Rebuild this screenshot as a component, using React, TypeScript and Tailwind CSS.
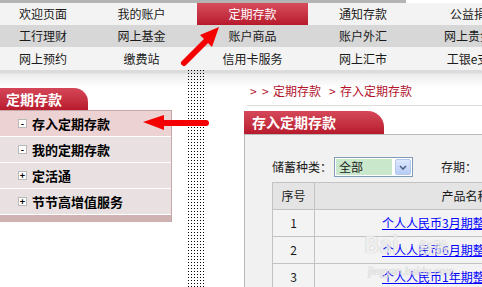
import React from 'react';

const navRows = [
  { bg: 'bg-[#f3f3f3]', h: 'h-[22px]', items: ['欢迎页面', '我的账户', '定期存款', '通知存款', '公益捐款'] },
  { bg: 'bg-[#d7d7d7]', h: 'h-[22px]', items: ['工行理财', '网上基金', '账户商品', '账户外汇', '网上贵金属'] },
  { bg: 'bg-[#f3f3f3]', h: 'h-[23px]', items: ['网上预约', '缴费站', '信用卡服务', '网上汇市', '工银e支付'] },
];

const colWidths = ['w-[86px]', 'w-[111px]', 'w-[111px]', 'w-[110px]', 'w-[112px]'];

const sideItems = [
  { label: '存入定期存款', open: true, active: true },
  { label: '我的定期存款', open: true, active: false },
  { label: '定活通', open: false, active: false },
  { label: '节节高增值服务', open: false, active: false },
];

const products = [
  { no: 1, name: '个人人民币3月期整存整取' },
  { no: 2, name: '个人人民币6月期整存整取' },
  { no: 3, name: '个人人民币1年期整存整取' },
];

const App = () => {
  return (
    <div className="relative h-[287px] w-[482px] overflow-hidden bg-white font-['Noto_Sans_CJK_SC',sans-serif] text-[#1a1a1a]">
      {/* top nav */}
      <div className="flex h-[3px]">
        <div className="w-[406px] bg-[#b4b4b4]" />
      </div>
      {navRows.map((row, r) => (
        <div key={r} className={`flex ${row.h} ${row.bg}`}>
          {row.items.map((item, i) => {
            const active = r === 0 && i === 2;
            return (
              <div
                key={item}
                className={`${colWidths[i]} flex shrink-0 items-center justify-center text-[12px] leading-none ${
                  active ? 'bg-gradient-to-b from-[#d84c5d] to-[#b7182c] text-white' : ''
                }`}
              >
                {item}
              </div>
            );
          })}
        </div>
      ))}

      {/* main */}
      <div className="flex h-[217px] bg-[linear-gradient(#dcdcdc_0px,#dcdcdc_3px,#ececec_4px,#ffffff_18px)]">
        {/* sidebar */}
        <div className="w-[172px] shrink-0 pt-[18px]">
          <div className="h-[22px] w-[88px] rounded-tr-[14px] bg-gradient-to-b from-[#d44658] to-[#b9192d] pl-[6px] text-[14px] font-bold leading-[22px] text-white">
            定期存款
          </div>
          <div className="border-t border-r border-[#c6a7a9]">
            {sideItems.map((s) => (
              <div
                key={s.label}
                className={`flex h-[26px] items-center border-b border-white pl-[18px] ${
                  s.active ? 'bg-[#ecd2d2]' : 'bg-[#e9e1e1]'
                }`}
              >
                <span className="flex h-[9px] w-[9px] items-center justify-center border border-[#b9b9b9] bg-white text-[9px] font-bold leading-none text-black">
                  {s.open ? '-' : '+'}
                </span>
                <span className="ml-[5px] text-[13px] font-bold leading-none text-black">{s.label}</span>
              </div>
            ))}
            <div className="h-[7px] bg-[#cfb3b3]" />
          </div>
        </div>

        {/* dotted separator */}
        <div className="ml-[16px] w-[16px] shrink-0 bg-[conic-gradient(from_270deg_at_1px_1px,#000_90deg,transparent_0)] bg-[length:3px_3px]" />

        {/* content */}
        <div className="ml-[40px] min-w-0 flex-1">
          <div className="flex pl-[6px] pt-[14px] text-[12px] leading-[14px] text-[#b3142b]">
            <span className="w-[12px]">&gt;</span>
            <span className="w-[11px]">&gt;</span>
            <span>定期存款</span>
            <span className="ml-[8px] w-[11px]">&gt;</span>
            <span>存入定期存款</span>
          </div>
          <div className="ml-[3px] mt-[7px] h-px bg-[#dcdcdc]" />
          <div className="mt-[5px] h-[23px] w-[140px] rounded-tr-[16px] bg-gradient-to-b from-[#d54859] to-[#b8192d] pl-[8px] text-[14px] font-bold leading-[23px] text-white">
            存入定期存款
          </div>
          <div className="h-[200px] w-[400px] border-l border-t border-[#b9b9b9] bg-[#f1f1f1] pl-[27px] pt-[22px]">
            <div className="flex h-[20px] items-center text-[12px]">
              <span className="w-[62px] leading-none">储蓄种类：</span>
              <div className="flex h-[20px] w-[79px] border border-[#7f9db9] bg-white p-px">
                <div className="flex flex-1 items-center bg-[#c9e7cb] pl-[3px] leading-none">全部</div>
                <div className="ml-[3px] flex w-[16px] items-center justify-center rounded-[2px] border border-[#b2c6ee] bg-gradient-to-b from-[#dce7fd] to-[#b7ccf5]">
                  <svg width="8" height="5" viewBox="0 0 8 5">
                    <path d="M1 1 L4 4 L7 1" fill="none" stroke="#4d6185" strokeWidth="1.6" />
                  </svg>
                </div>
              </div>
              <span className="ml-[28px] leading-none">存期：</span>
            </div>
            <table className="mt-[5px] table-fixed border-collapse text-[12px]">
              <colgroup>
                <col className="w-[42px]" />
                <col className="w-[302px]" />
              </colgroup>
              <thead>
                <tr className="h-[27px] bg-[#e4e4e4]">
                  <th className="border border-[#c2c2c2] font-normal">序号</th>
                  <th className="border border-[#c2c2c2] font-normal">产品名称</th>
                </tr>
              </thead>
              <tbody>
                {products.map((p) => (
                  <tr key={p.no} className="h-[27px] bg-[#f3f3f3]">
                    <td className="border border-[#c2c2c2] text-center">{p.no}</td>
                    <td className="whitespace-nowrap border border-[#c2c2c2] pl-[67px] text-left">
                      <a className="text-[#0000ff] underline">{p.name}</a>
                    </td>
                  </tr>
                ))}
              </tbody>
            </table>
          </div>
        </div>
      </div>

      {/* watermark */}
      <div className="pointer-events-none absolute left-[364px] top-[232px] flex items-end text-[#efefef] opacity-80 [text-shadow:0_0_1px_#a8a8a8]">
        <span className="text-[22px] font-bold leading-none">Bai</span>
        <span className="ml-[20px] text-[15px] font-bold leading-none">经验</span>
      </div>
      <div className="pointer-events-none absolute left-[368px] top-[266px] text-[10px] leading-none text-[#ebebeb] opacity-80 [text-shadow:0_0_1px_#a8a8a8]">
        jingyan.baidu.com
      </div>

      {/* red annotation arrows */}
      <svg className="pointer-events-none absolute inset-0" width="482" height="287" viewBox="0 0 482 287">
        <line x1="184" y1="63" x2="206" y2="41" stroke="#f40000" strokeWidth="6" strokeLinecap="round" />
        <polygon points="219,27 200,35 212,47" fill="#f40000" />
        <line x1="160" y1="123" x2="206" y2="123" stroke="#f40000" strokeWidth="6" strokeLinecap="round" />
        <polygon points="143,122 164,115 164,130" fill="#f40000" />
      </svg>
    </div>
  );
};

export default App;
